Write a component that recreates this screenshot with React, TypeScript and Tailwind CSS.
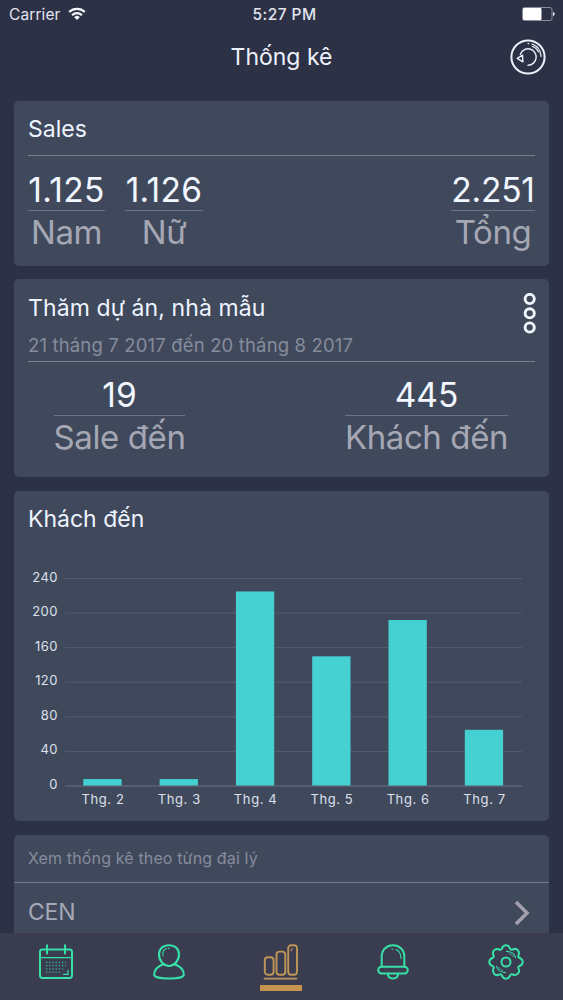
import React from 'react';

type Visit = { month: string; count: number };

const visits: Visit[] = [
    { month: 'Thg. 2', count: 8 },
    { month: 'Thg. 3', count: 8 },
    { month: 'Thg. 4', count: 225 },
    { month: 'Thg. 5', count: 150 },
    { month: 'Thg. 6', count: 192 },
    { month: 'Thg. 7', count: 65 },
];

const ticks = [240, 200, 160, 120, 80, 40, 0];

const StatusBar: React.FC = () => (
    <div className="grid h-[30px] grid-cols-3 items-center pl-[9px] pr-[8px] text-[15.5px] text-[#e2e5f0]">
        <div className="flex items-center gap-[7px]">
            <span className="tracking-[0.1px]">Carrier</span>
            <svg width="18" height="14" viewBox="0 0 18 14" fill="none" stroke="#f4f6fc" strokeWidth="2.2" className="mb-[2px]">
                <path d="M1.2 5a11.2 11.2 0 0 1 15.6 0" />
                <path d="M4.1 8.2a7 7 0 0 1 9.8 0" />
                <path d="M9 13L6.2 10.2a4 4 0 0 1 5.6 0z" fill="#f4f6fc" stroke="none" />
            </svg>
        </div>
        <div className="pl-[5px] text-center font-medium tracking-[0.45px] whitespace-nowrap">5:27 PM</div>
        <div className="flex justify-end">
            <svg width="33" height="14" viewBox="0 0 33 14" className="mb-[2px]">
                <rect x="0.5" y="0.5" width="29.5" height="13" rx="2" fill="none" stroke="#8b8e9d" />
                <rect x="1" y="1" width="18.5" height="12" rx="1" fill="#fff" />
                <path d="M31 5c2.2 0.3 2.2 3.7 0 4z" fill="#e2e5f0" />
            </svg>
        </div>
    </div>
);

const RefreshIcon: React.FC = () => (
    <svg width="36" height="36" viewBox="0 0 36 36" fill="none" stroke="#eef1fb" strokeLinecap="round" strokeLinejoin="round">
        <circle cx="18" cy="18" r="16.6" strokeWidth="2" />
        <path d="M10.3 15.2A8.2 8.2 0 1 1 18 26.2" strokeWidth="1.4" />
        <path d="M7.2 19.4l5.3-3.2.4 6.6z" strokeWidth="1.4" />
        <path d="M22 5a13.8 13.8 0 0 1 9 12.4" strokeWidth="1.2" />
        <path d="M22.2 7.300a11.500 11.500 0 0 1 6.300 5.700M18 4.600h.8" strokeWidth="1.1" />
    </svg>
);

type StatProps = { value: string; label: string; className?: string };

const Stat: React.FC<StatProps> = ({ value, label, className = '' }) => (
    <div className={`flex flex-col items-center whitespace-nowrap ${className}`}>
        <div className="h-[41px] w-full border-b-[1.5px] border-[#697486] text-center text-[33.5px] leading-[40px] text-[#f1f6ff]">{value}</div>
        <div className="text-[33px] leading-[43px] tracking-[-0.4px] text-[#a5a8b4]">{label}</div>
    </div>
);

const VisitChart: React.FC = () => {
    const base = 226;
    const unit = 207.5 / 240;
    return (
        <svg width="535" height="260" viewBox="0 0 535 260" className="block" fontSize="13">
            {ticks.map(t => (
                <g key={t}>
                    <line x1="51" x2="508" y1={base - t * unit} y2={base - t * unit} stroke={t === 0 ? '#697083' : '#535c70'} strokeWidth="1" />
                    <text x="43.8" y={base - t * unit + 3} textAnchor="end" fill="#dce0ec" letterSpacing="0.4">{t}</text>
                </g>
            ))}
            {visits.map((v, i) => (
                <g key={v.month}>
                    <rect x={69.3 + i * 76.3} y={base - v.count * unit} width="38.3" height={v.count * unit - 0.5} fill="#45d1d2" />
                    <text x={89 + i * 76.3} y="244" textAnchor="middle" fill="#dce0ec" letterSpacing="0.6">{v.month}</text>
                </g>
            ))}
        </svg>
    );
};

const CalendarIcon = () => (
    <svg width="36" height="36" viewBox="0 0 36 36" fill="none" stroke="#36e0a6" strokeWidth="2" strokeLinecap="round">
        <rect x="2" y="5.6" width="32" height="28.4" rx="2.4" />
        <path d="M9 1.2v8.400M27 1.200v8.400" />
        <path d="M2 13.600h32" strokeWidth="1.2" />
        <path d="M8 18.500h20M8 21.700h20M8 24.900h17M8 28.100h14" strokeWidth="1.3" strokeDasharray="1.3 1.9" strokeLinecap="butt" opacity="0.75" />
        <path d="M25.500 30.400h4.500v-4" strokeWidth="1.2" />
    </svg>
);

const PersonIcon = () => (
    <svg width="34" height="36" viewBox="0 0 34 36" fill="none" stroke="#36e0a6" strokeWidth="2.1" strokeLinejoin="round" strokeLinecap="round">
        <path d="M17 1.300c-6 0-10 3.700-10 9.300C7 16.600 11.500 22 17 22S27 16.600 27 10.600C27 5 23 1.300 17 1.300z" />
        <path d="M12 20C6.200 22 2.200 26 2.200 30.700c0 2.500 6.500 3.800 14.800 3.800s14.800-1.300 14.800-3.800c0-4.700-4-8.700-9.800-10.700" />
        <path d="M11 12c-.8-4 1-6.500 3.500-7.400M16.500 4.400h.5" strokeWidth="1.1" />
    </svg>
);

const ChartIcon = () => (
    <svg width="36" height="36" viewBox="0 0 36 36" fill="none" stroke="#bf9658" strokeWidth="1.9" strokeLinecap="round">
        <rect x="1.800" y="13.300" width="8.800" height="17.500" rx="3" />
        <rect x="13.500" y="7.600" width="8.800" height="23.200" rx="3" />
        <rect x="25.200" y="1.300" width="8.800" height="29.500" rx="3" />
        <path d="M1.500 34.600h32" />
        <path d="M28.200 7v-2h1.800" strokeWidth="1" />
    </svg>
);

const BellIcon = () => (
    <svg width="34" height="36" viewBox="0 0 34 36" fill="none" stroke="#36e0a6" strokeWidth="2" strokeLinecap="round">
        <path d="M5.700 22.500V12.600C5.700 5.900 10.500 1.300 17 1.300s11.300 4.600 11.300 11.300v9.900" />
        <rect x="2.200" y="22.700" width="29.600" height="6.800" rx="3.400" />
        <path d="M11.900 29.700c0 3 1.800 4.700 5.100 4.700s5.100-1.700 5.100-4.700" />
        <path d="M20 5.600c3.500 1.300 5 4.500 5 9M16 5h.8" strokeWidth="1.100" />
    </svg>
);

const GearIcon = () => (
    <svg width="36" height="36" viewBox="0 0 36 36" fill="none" stroke="#36e0a6" strokeWidth="2" strokeLinejoin="round" strokeLinecap="round">
        <path d="M14 4.400C14.800 2.200 16.100 1.300 18 1.300s3.200.9 4 3.100c.5 1.300 1.400 1.700 2.700 1.100 2.200-1 3.900-.8 5.100.7s1.700 2.900.7 5.100c-.6 1.300-.2 2.200 1.100 2.700 2.200.8 3.100 2.100 3.100 4s-.9 3.200-3.100 4c-1.300.5-1.700 1.400-1.100 2.700 1 2.200.8 3.900-.7 5.100s-2.900 1.700-5.100.7c-1.300-.6-2.200-.2-2.700 1.100-.8 2.200-2.100 3.100-4 3.100s-3.200-.9-4-3.100c-.5-1.300-1.400-1.700-2.700-1.100-2.200 1-3.900.8-5.100-.7s-1.700-2.900-.7-5.100c.6-1.300.2-2.200-1.100-2.700C2.200 21.200 1.300 19.900 1.300 18s.9-3.200 3.100-4c1.300-.5 1.700-1.400 1.100-2.700-1-2.200-.8-3.900.7-5.100s2.900-1.700 5.100-.7c1.300.6 2.200.2 2.700-1.100z" />
        <circle cx="18" cy="18" r="4.500" />
        <path d="M18.500 7.400c5 0 8 2.600 9.200 6.400M17.500 28.600c-5 0-8-2.600-9.200-6.400" strokeWidth="1.1" />
        <path d="M21 9.600c2 .5 3.500 1.700 4.500 3.200M15 26.400c-2-.5-3.500-1.700-4.500-3.200" strokeWidth="0.7" />
    </svg>
);

const tabs = [CalendarIcon, PersonIcon, ChartIcon, BellIcon, GearIcon];

const App: React.FC = () => {
    return (
        <div className="flex h-[1000px] w-[563px] flex-col overflow-hidden bg-[#2d3145] font-['Inter','Liberation_Sans',sans-serif]">
            <StatusBar />
            <header className="grid h-[70.5px] shrink-0 grid-cols-[60px_1fr_60px] items-start">
                <span />
                <h1 className="pt-[12px] text-center text-[23px] leading-[30px] text-[#eef1fb]">Thống kê</h1>
                <button className="ml-[6.5px] mt-[9px] justify-self-start">
                    <RefreshIcon />
                </button>
            </header>

            <main className="flex min-h-0 flex-1 flex-col gap-[13.5px] overflow-hidden px-[14px]">
                <section className="h-[165px] shrink-0 rounded-[5px] bg-[#40495c] px-[14px]">
                    <h2 className="h-[55px] border-b-[1.5px] border-[#728087] pt-[13px] text-[23px] leading-[30px] text-[#eef4ff]">Sales</h2>
                    <div className="flex pt-[14px]">
                        <Stat value="1.125" label="Nam" className="w-[77px] tracking-[0.3px]" />
                        <Stat value="1.126" label="Nữ" className="ml-[20px] w-[78px] tracking-[0.3px]" />
                        <Stat value="2.251" label="Tổng" className="ml-auto w-[84px] tracking-[-0.2px]" />
                    </div>
                </section>

                <section className="h-[198px] shrink-0 rounded-[5px] bg-[#40495c] px-[14px]">
                    <div className="flex h-[82.5px] justify-between border-b-[1.5px] border-[#7a8292]">
                        <div className="pt-[14px]">
                            <h2 className="text-[23px] leading-[30px] tracking-[0.1px] text-[#eef4ff]">Thăm dự án, nhà mẫu</h2>
                            <p className="pt-[9px] text-[18.5px] leading-[26px] tracking-[0.16px] text-[#868c9c]">21 tháng 7 2017 đến 20 tháng 8 2017</p>
                        </div>
                        <svg width="13" height="42" viewBox="0 0 13 42" fill="none" stroke="#f1f6ff" strokeWidth="2.900" className="-mr-[1px] mt-[14px]">
                            <circle cx="6.700" cy="6" r="4.600" />
                            <circle cx="6.700" cy="20.300" r="4.600" />
                            <circle cx="6.700" cy="34.500" r="4.600" />
                        </svg>
                    </div>
                    <div className="flex justify-between pl-[26px] pr-[27px] pt-[13px]">
                        <Stat value="19" label="Sale đến" className="w-[131px]" />
                        <Stat value="445" label="Khách đến" className="w-[163px]" />
                    </div>
                </section>

                <section className="h-[330.5px] shrink-0 rounded-[5px] bg-[#40495c]">
                    <h2 className="h-[69px] px-[14px] pt-[13px] text-[23px] leading-[30px] text-[#eef4ff]">Khách đến</h2>
                    <VisitChart />
                </section>

                <section className="h-[140px] shrink-0 rounded-[5px] bg-[#40495c]">
                    <div className="h-[48.5px] border-b-[1.5px] border-[#747b8e] px-[14px] text-[16px] leading-[46px] tracking-[0.14px] text-[#868c9c]">Xem thống kê theo từng đại lý</div>
                    <div className="flex h-[59px] items-center justify-between pl-[14px] pr-[18px] text-[23px] text-[#a5a8b4]">
                        <span className="tracking-[-0.2px]">CEN</span>
                        <svg width="17" height="26" viewBox="0 0 17 26" fill="none" stroke="#a29fac" strokeWidth="3.6">
                            <path d="M2 2l11 11L2 24" />
                        </svg>
                    </div>
                </section>
            </main>

            <nav className="grid h-[67.5px] shrink-0 grid-cols-5 bg-[#3a3c50] pr-[1px]">
                {tabs.map((Icon, i) => (
                    <div key={i} className="flex flex-col items-center gap-[4.5px] pt-[11.5px]">
                        <Icon />
                        {i === 2 && <span className="h-[6px] w-[42px] bg-[#c3954e]" />}
                    </div>
                ))}
            </nav>
        </div>
    );
};

export default App;
